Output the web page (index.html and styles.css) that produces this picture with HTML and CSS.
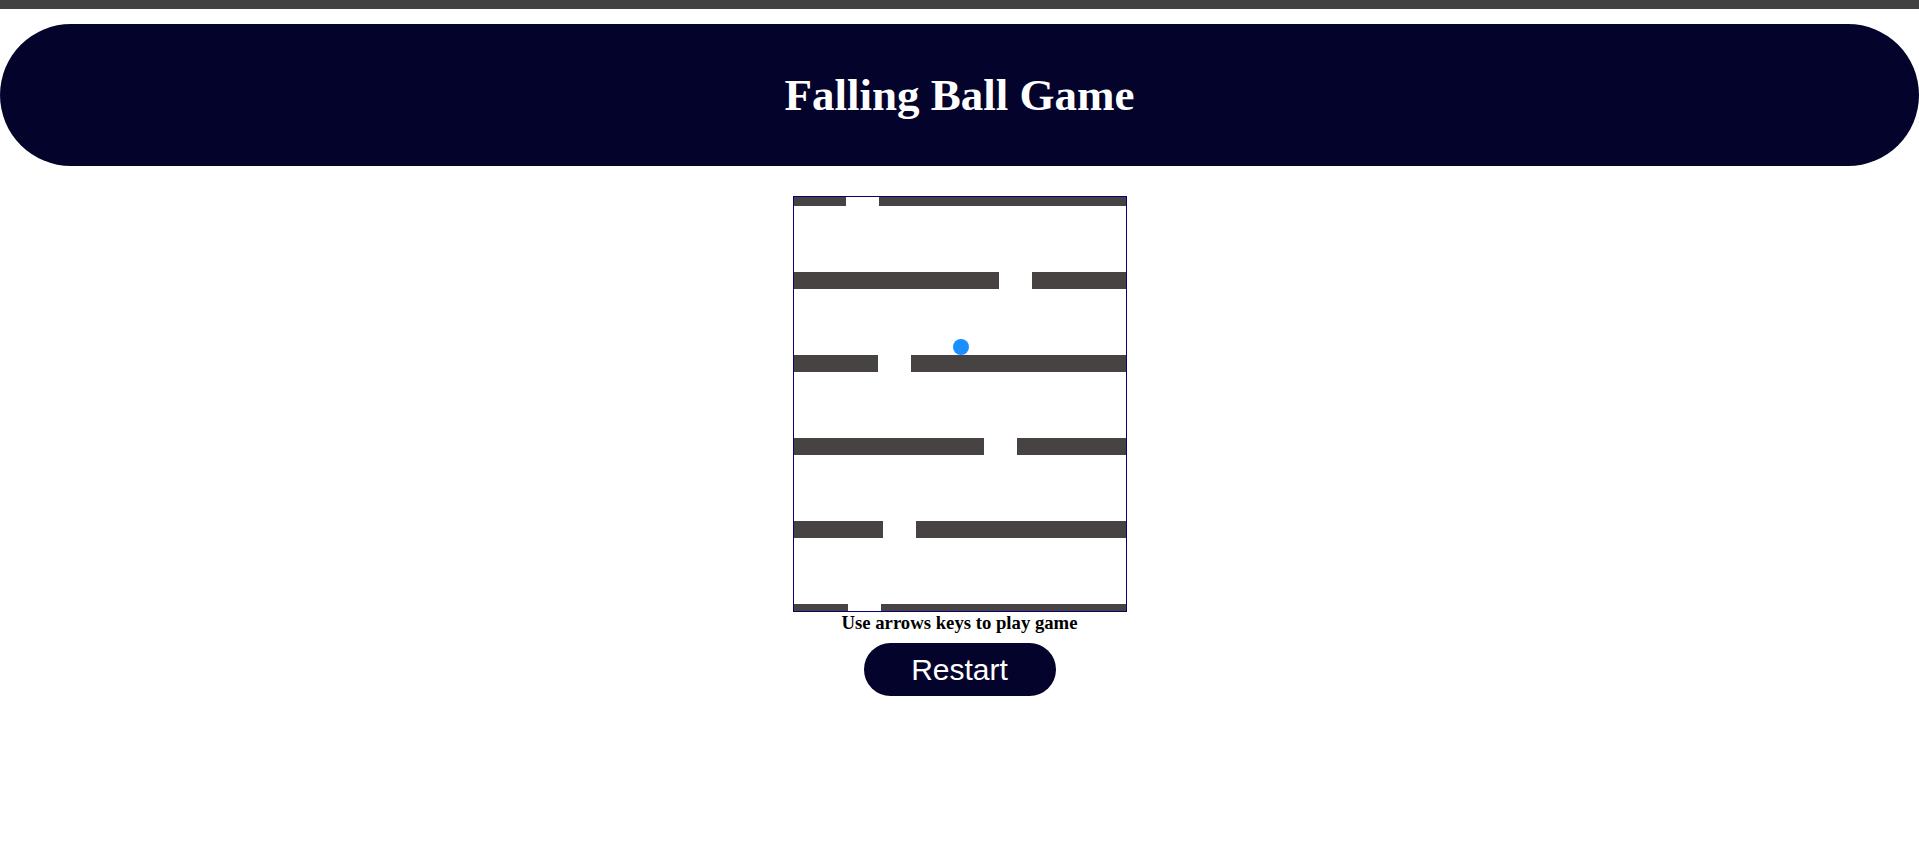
FILE: index.html
```html
<!DOCTYPE html>
<html>
<head>
<meta charset="utf-8">
<title>Falling Ball Game</title>
<link rel="stylesheet" href="styles.css">
</head>
<body>
<div class="topbar"></div>
<header class="header"><h1 class="title">Falling Ball Game</h1></header>
<main class="main">
  <div class="game">
    <div class="row" style="top:-8px"><div class="bar" style="width:52px"></div><div class="hole"></div><div class="bar grow"></div></div>
    <div class="row" style="top:75px"><div class="bar" style="width:205px"></div><div class="hole"></div><div class="bar grow"></div></div>
    <div class="row" style="top:158px"><div class="bar" style="width:84px"></div><div class="hole"></div><div class="bar grow"></div></div>
    <div class="row" style="top:241px"><div class="bar" style="width:190px"></div><div class="hole"></div><div class="bar grow"></div></div>
    <div class="row" style="top:324px"><div class="bar" style="width:89px"></div><div class="hole"></div><div class="bar grow"></div></div>
    <div class="row" style="top:407px"><div class="bar" style="width:54px"></div><div class="hole"></div><div class="bar grow"></div></div>
    <div class="ball" style="left:159px;top:142px"></div>
  </div>
  <h3 class="hint">Use arrows keys to play game</h3>
  <button class="restart">Restart</button>
</main>
</body>
</html>
```
FILE: styles.css
```css
html, body {
  margin: 0;
  padding: 0;
  background: #ffffff;
  font-family: "Liberation Serif", "Times New Roman", serif;
}
.topbar {
  height: 9px;
  background: #414141;
}
.header {
  margin-top: 15px;
  height: 142px;
  background: #03032c;
  border-radius: 71px;
  display: flex;
  align-items: center;
  justify-content: center;
}
.title {
  margin: 0;
  color: #ffffff;
  font-size: 45px;
  font-weight: bold;
  line-height: 1;
}
.main {
  display: flex;
  flex-direction: column;
  align-items: center;
  padding-top: 30px;
}
.game {
  position: relative;
  width: 332px;
  height: 414px;
  border: 1px solid #0c006e;
  overflow: hidden;
  background: #ffffff;
}
.row {
  position: absolute;
  left: 0;
  width: 100%;
  height: 17px;
  display: flex;
}
.bar {
  height: 100%;
  background: #474342;
}
.hole {
  width: 33px;
  flex: none;
}
.grow {
  flex: 1;
}
.ball {
  position: absolute;
  width: 16px;
  height: 16px;
  border-radius: 50%;
  background: #1a8fff;
}
.hint {
  margin: 0;
  font-size: 18.72px;
  font-weight: bold;
  line-height: 22px;
  color: #000000;
}
.restart {
  margin-top: 9px;
  width: 192px;
  height: 53px;
  border: none;
  border-radius: 27px;
  background: #03032c;
  color: #ffffff;
  font-family: "Liberation Sans", Arial, sans-serif;
  font-size: 30px;
  padding: 0;
}
```
